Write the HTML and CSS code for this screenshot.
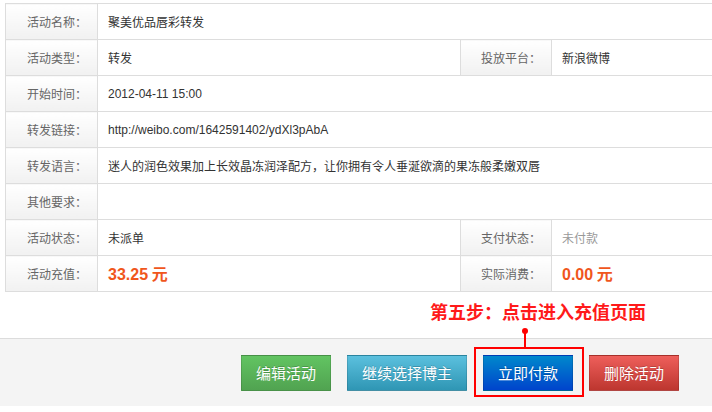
FILE: index.html
```html
<!DOCTYPE html>
<html lang="zh-CN">
<head>
<meta charset="utf-8">
<title>活动详情</title>
<link rel="stylesheet" href="styles.css">
</head>
<body>
<div class="page">
  <table class="info">
    <colgroup>
      <col class="c-label"><col class="c-value"><col class="c-label2"><col class="c-value2">
    </colgroup>
    <tr><td class="lbl">活动名称：</td><td class="val" colspan="3">聚美优品唇彩转发</td></tr>
    <tr><td class="lbl">活动类型：</td><td class="val">转发</td><td class="lbl">投放平台：</td><td class="val">新浪微博</td></tr>
    <tr><td class="lbl">开始时间：</td><td class="val latin" colspan="3">2012-04-11 15:00</td></tr>
    <tr><td class="lbl">转发链接：</td><td class="val latin" colspan="3">http://weibo.com/1642591402/ydXl3pAbA</td></tr>
    <tr><td class="lbl">转发语言：</td><td class="val" colspan="3">迷人的润色效果加上长效晶冻润泽配方，让你拥有令人垂涎欲滴的果冻般柔嫩双唇</td></tr>
    <tr><td class="lbl">其他要求：</td><td class="val" colspan="3"></td></tr>
    <tr><td class="lbl">活动状态：</td><td class="val">未派单</td><td class="lbl">支付状态：</td><td class="val muted">未付款</td></tr>
    <tr><td class="lbl">活动充值：</td><td class="val money"><span class="num">33.25</span> 元</td><td class="lbl">实际消费：</td><td class="val money"><span class="num">0.00</span> 元</td></tr>
  </table>
  <div class="spacer"></div>
  <div class="footer">
    <button class="btn btn-green">编辑活动</button>
    <button class="btn btn-cyan">继续选择博主</button>
    <button class="btn btn-blue">立即付款</button>
    <button class="btn btn-red">删除活动</button>
  </div>
  <div class="note">第五步：点击进入充值页面</div>
  <div class="note-dot"></div>
  <div class="note-line"></div>
  <div class="note-box"></div>
</div>
</body>
</html>
```
FILE: styles.css
```css
html, body {
  margin: 0;
  padding: 0;
  background: #fff;
  overflow: hidden;
}
.page {
  position: relative;
  width: 712px;
  height: 412px;
  padding-top: 3px;
  box-sizing: border-box;
  font-family: "Noto Sans CJK SC", "Liberation Sans", sans-serif;
  font-size: 12px;
}
.info {
  margin-left: 5px;
  width: 712px;
  border-collapse: collapse;
  table-layout: fixed;
}
.c-label { width: 92px; }
.c-value { width: 363px; }
.c-label2 { width: 91px; }
.info td {
  border: 1px solid #dddddd;
  height: 36px;
  padding: 0 10px;
  vertical-align: middle;
  white-space: nowrap;
  box-sizing: border-box;
  line-height: 16px;
}
.lbl {
  text-align: right;
  color: #666;
  background: linear-gradient(#ffffff, #f1f1f1);
}
.info td.lbl { padding-right: 10px; }
.val {
  color: #333;
}
.latin {
  font-family: "Liberation Sans", "Noto Sans CJK SC", sans-serif;
}
.muted { color: #999; }
.money {
  color: #f0561c;
  font-size: 16px;
  font-weight: bold;
}
.money .num {
  font-family: "Liberation Sans", sans-serif;
}
.spacer { height: 46px; }
.footer {
  border-top: 1px solid #dcdcdc;
  background: #f4f4f4;
  height: 67px;
  display: flex;
  justify-content: flex-end;
  align-items: center;
  gap: 16px;
  padding-right: 33px;
}
.btn {
  height: 36px;
  width: 90px;
  border: 1px solid rgba(0,0,0,0.12);
  border-bottom-color: rgba(0,0,0,0.25);
  color: #fff;
  font-family: "Noto Sans CJK SC", sans-serif;
  font-size: 15px;
  padding: 0;
  text-shadow: 0 -1px 0 rgba(0,0,0,0.2);
}
.btn-cyan { width: 120px; }
.btn-green { background: linear-gradient(#62c462, #51a351); }
.btn-cyan { background: linear-gradient(#5bc0de, #2f96b4); }
.btn-blue { background: linear-gradient(#0088cc, #0044cc); }
.btn-red { background: linear-gradient(#ee5f5b, #bd362f); }
.note {
  position: absolute;
  left: 430px;
  top: 300px;
  color: #ff1a1a;
  font-size: 18px;
  font-weight: bold;
  line-height: 22px;
  white-space: nowrap;
}
.note-dot {
  position: absolute;
  left: 522px;
  top: 328px;
  width: 6px;
  height: 6px;
  border-radius: 50%;
  background: #ff0000;
}
.note-line {
  position: absolute;
  left: 524px;
  top: 331px;
  width: 2px;
  height: 17px;
  background: #ff0000;
}
.note-box {
  position: absolute;
  left: 474px;
  top: 347px;
  width: 106px;
  height: 46px;
  border: 2px solid #ff0000;
}
```
